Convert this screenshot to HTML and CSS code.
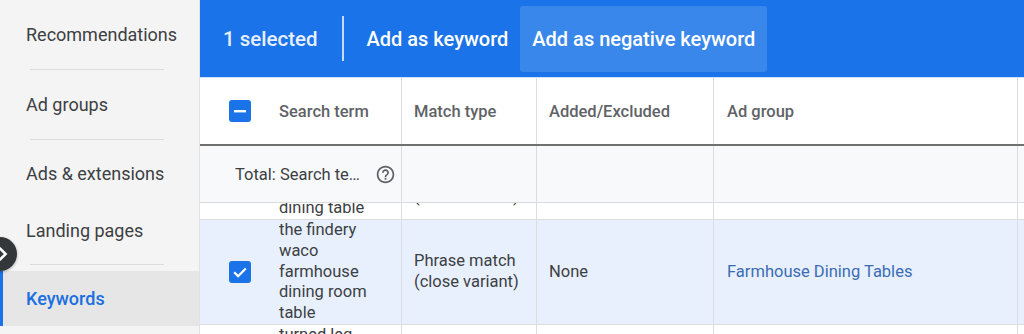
FILE: index.html
```html
<!DOCTYPE html>
<html lang="en">
<head>
<meta charset="utf-8">
<title>Search terms</title>
<link rel="stylesheet" href="styles.css">
</head>
<body>
<div class="app">
  <nav class="sidebar">
    <div class="nav-item item-rec">Recommendations</div>
    <div class="nav-divider"></div>
    <div class="nav-item item-adgroups">Ad groups</div>
    <div class="nav-divider"></div>
    <div class="nav-item item-ads">Ads &amp; extensions</div>
    <div class="nav-item item-landing">Landing pages</div>
    <div class="nav-divider divider-landing"></div>
    <div class="nav-item item-keywords active">Keywords</div>
  </nav>

  <main class="main">
    <div class="action-bar">
      <span class="selected-count">1 selected</span>
      <span class="bar-divider"></span>
      <span class="bar-btn">Add as keyword</span>
      <span class="bar-btn bar-btn-hover">Add as negative keyword</span>
    </div>

    <div class="table">
      <div class="row head">
        <div class="cell first">
          <span class="checkbox">
            <svg viewBox="0 0 22 22" width="22" height="22"><rect x="5" y="10" width="12" height="2.4" fill="#fff"/></svg>
          </span>
          <span class="cell-text">Search term</span>
        </div>
        <div class="cell">Match type</div>
        <div class="cell">Added/Excluded</div>
        <div class="cell">Ad group</div>
        <div class="cell last"></div>
      </div>

      <div class="row total">
        <div class="cell total-first">
          <span>Total: Search te…</span>
          <svg class="help" viewBox="0 0 24 24" width="21" height="21"><path fill="#5f6368" d="M11 18h2v-2h-2v2zm1-16C6.48 2 2 6.48 2 12s4.48 10 10 10 10-4.48 10-10S17.52 2 12 2zm0 18c-4.41 0-8-3.59-8-8s3.59-8 8-8 8 3.59 8 8-3.59 8-8 8zm0-14c-2.21 0-4 1.79-4 4h2c0-1.1.9-2 2-2s2 .9 2 2c0 2-3 1.75-3 5h2c0-2.25 3-2.5 3-5 0-2.21-1.79-4-4-4z"/></svg>
        </div>
        <div class="cell"></div>
        <div class="cell"></div>
        <div class="cell"></div>
        <div class="cell last"></div>
      </div>

      <div class="rows-viewport">
        <div class="row data prev">
          <div class="cell first">
            <span class="checkbox-space"></span>
            <span class="cell-text">modern farmhouse dining table</span>
          </div>
          <div class="cell mid">Phrase match<br>(close variant)</div>
          <div class="cell mid"></div>
          <div class="cell mid"></div>
          <div class="cell last"></div>
        </div>

        <div class="row data selected">
          <div class="cell first">
            <span class="checkbox checked">
              <svg viewBox="0 0 22 22" width="22" height="22"><path d="M5.2 11.3l3.9 3.9 7.7-7.7" fill="none" stroke="#fff" stroke-width="2.3"/></svg>
            </span>
            <span class="cell-text">the findery waco farmhouse dining room table</span>
          </div>
          <div class="cell mid">Phrase match<br>(close variant)</div>
          <div class="cell mid">None</div>
          <div class="cell mid"><a class="link" href="#">Farmhouse Dining Tables</a></div>
          <div class="cell last"></div>
        </div>

        <div class="row data next">
          <div class="cell first">
            <span class="checkbox-space"></span>
            <span class="cell-text">turned leg farmhouse table</span>
          </div>
          <div class="cell"></div>
          <div class="cell"></div>
          <div class="cell"></div>
          <div class="cell last"></div>
        </div>
      </div>
    </div>
  </main>

  <button class="collapse" aria-label="Expand">
    <svg viewBox="0 0 24 24" width="24" height="24"><path d="M7.6 17.2L12.8 12 7.6 6.8 9.4 5l7 7-7 7z" fill="#fff"/></svg>
  </button>
</div>
</body>
</html>
```

FILE: styles.css
```css
* { box-sizing: border-box; }

html, body {
  margin: 0;
  padding: 0;
  width: 1024px;
  height: 334px;
  overflow: hidden;
  background: #ffffff;
  font-family: Roboto, "Noto Sans", "Liberation Sans", sans-serif;
}

.app {
  position: relative;
  display: flex;
  width: 1024px;
  height: 334px;
  overflow: hidden;
}

/* ---------- Sidebar ---------- */
.sidebar {
  width: 200px;
  flex: 0 0 200px;
  background: #f4f4f4;
  border-right: 1px solid #e2e2e2;
  display: flex;
  flex-direction: column;
}

.nav-item {
  display: flex;
  align-items: center;
  padding-left: 26px;
  font-size: 18px;
  color: #3c4043;
  flex: 0 0 auto;
}

.item-rec { height: 69px; }
.item-adgroups { height: 69px; }
.item-ads { height: 66px; }
.item-landing { height: 48px; margin-bottom: 10px; }
.item-keywords { height: 55px; margin-top: 6px; }

.nav-divider {
  height: 1px;
  margin: 0 35px 0 30px;
  background: #dcdcdc;
  flex: 0 0 1px;
}

.nav-item.active {
  background: #e6e6e6;
  color: #1a6fe0;
  font-weight: 500;
  box-shadow: inset 3px 0 0 #1a73e8;
}

/* ---------- Main ---------- */
.main {
  flex: 1;
  display: flex;
  flex-direction: column;
  min-width: 0;
}

.action-bar {
  height: 78px;
  flex: 0 0 78px;
  background: #1a73e8;
  border-bottom: 1px solid #cfe0fa;
  display: flex;
  align-items: center;
  padding-left: 23px;
  color: #ffffff;
  font-size: 20px;
}

.selected-count {
  font-weight: 500;
  font-size: 20.5px;
  color: #e6effd;
}

.bar-divider {
  width: 2px;
  height: 45px;
  background: rgba(255, 255, 255, 0.75);
  margin: 0 23px 0 24px;
}

.bar-btn {
  font-weight: 500;
  padding: 0 12px;
  height: 66px;
  display: flex;
  align-items: center;
  border-radius: 3px;
  margin-left: -12px;
}

.bar-btn + .bar-btn { margin-left: 0; }

.bar-btn-hover {
  background: #3a87ec;
}

/* ---------- Table ---------- */
.table {
  flex: 1;
  display: flex;
  flex-direction: column;
  min-height: 0;
}

.row {
  display: grid;
  grid-template-columns: 202px 135px 177px 304px 1fr;
  grid-template-rows: minmax(0, 1fr);
  overflow: hidden;
}

.cell {
  border-right: 1px solid #dadce0;
  padding-left: 12px;
  display: flex;
  align-items: center;
  font-size: 16.5px;
  color: #3c4043;
  min-width: 0;
  min-height: 0;
  overflow: hidden;
}

.cell.last { border-right: none; }

.cell.first {
  padding-left: 29px;
  padding-right: 14px;
}

.head {
  height: 68px;
  flex: 0 0 68px;
  border-bottom: 2px solid #707070;
}

.head .cell {
  color: #5f6368;
  font-weight: 500;
  padding-left: 12px;
}

.head .cell.first { padding-left: 29px; }

.head .cell:nth-child(4) { padding-left: 13px; }

.checkbox {
  width: 22px;
  height: 22px;
  flex: 0 0 22px;
  border-radius: 3px;
  background: #1a73e8;
  display: inline-flex;
  margin-right: 28px;
}

.checkbox-space {
  width: 22px;
  flex: 0 0 22px;
  margin-right: 28px;
}

.total {
  height: 57px;
  flex: 0 0 57px;
  background: #f8f9fa;
  border-bottom: 1px solid #dadce0;
}

.total-first {
  padding-left: 35px;
  justify-content: space-between;
  padding-right: 5px;
}

.help { flex: 0 0 21px; }

.rows-viewport {
  flex: 1;
  overflow: hidden;
  min-height: 0;
}

.data {
  border-bottom: 1px solid #dadce0;
  line-height: 20.8px;
}

.data .cell-text { display: block; }

.prev {
  height: 63px;
  margin-top: -46px;
}

.prev .cell.mid { align-items: flex-start; padding-top: 9px; }

.selected {
  background: #e8f0fe;
  height: 105px;
}

.data .cell:nth-child(4) { padding-left: 13px; }

.link {
  color: #3b6cb3;
  text-decoration: none;
}

.next { height: 40px; }

.next .cell.first { align-items: flex-start; }

/* ---------- Collapse button (overlay) ---------- */
.collapse {
  position: absolute;
  left: -17px;
  top: 237px;
  width: 34px;
  height: 34px;
  border-radius: 50%;
  border: none;
  padding: 0 0 0 8px;
  background: #34373a;
  display: flex;
  align-items: center;
  justify-content: flex-start;
  box-shadow: 0 1px 3px rgba(0,0,0,0.3);
}
```
